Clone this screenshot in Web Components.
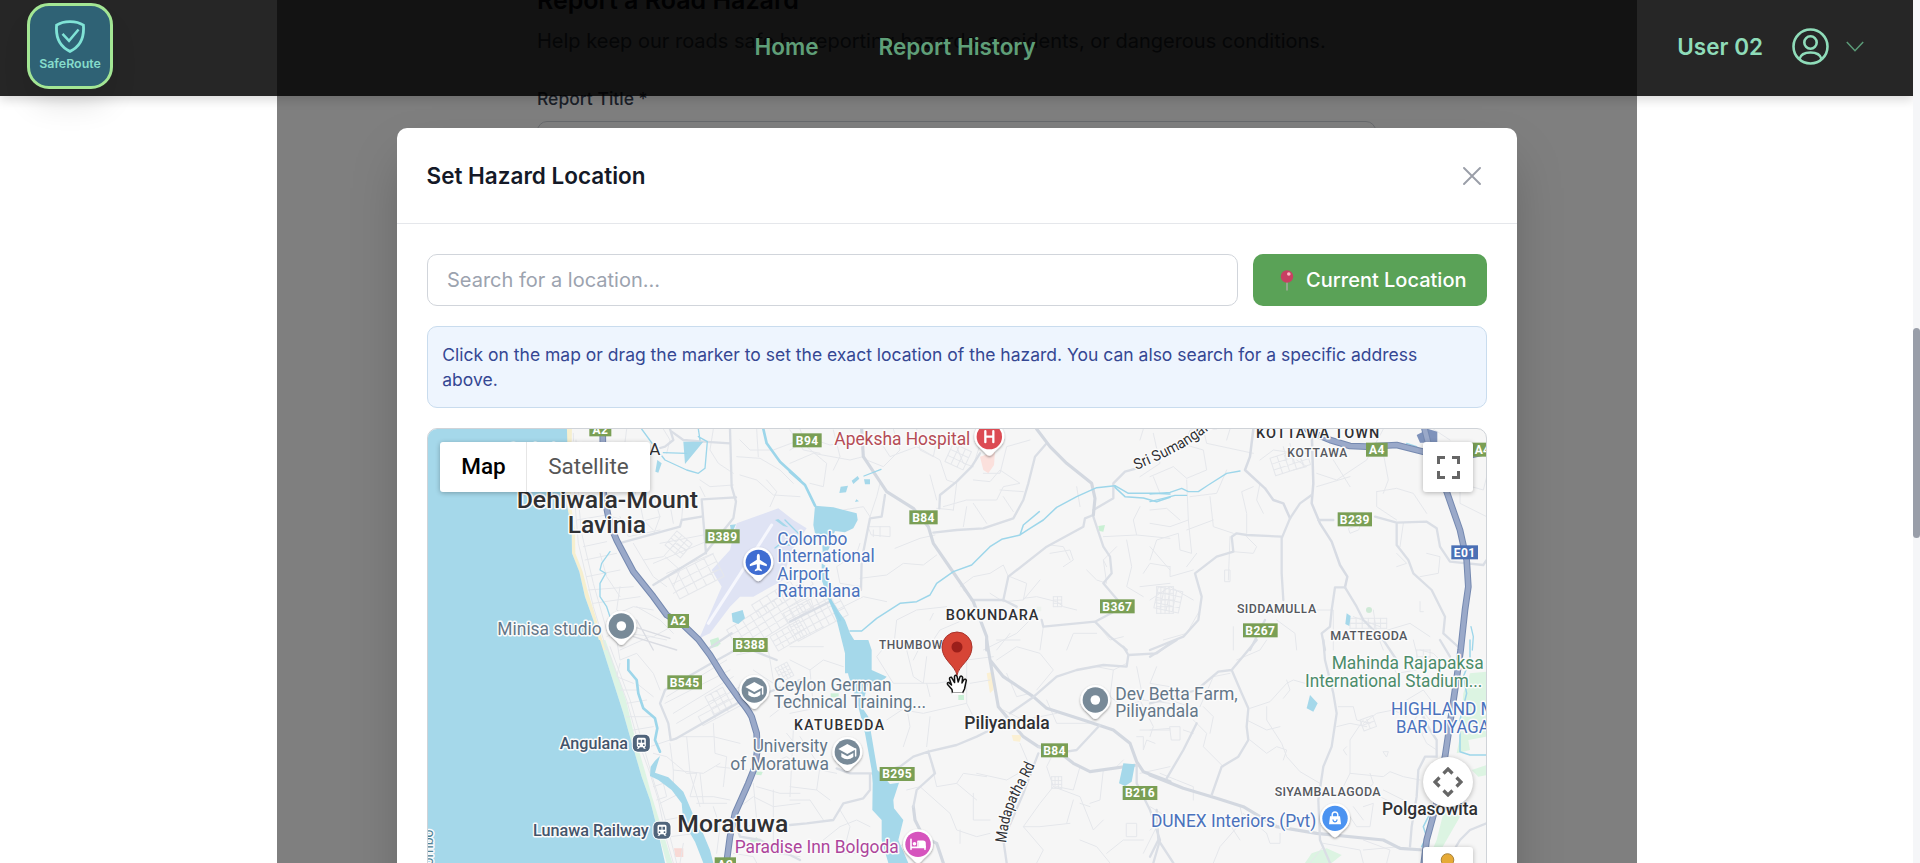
<!DOCTYPE html>
<html lang="en">
<head>
<meta charset="utf-8">
<title>SafeRoute</title>
<style>
html,body{margin:0;height:100%;overflow:hidden;background:#fff;font-family:Inter,"Liberation Sans",sans-serif}
</style>
</head>
<body>
<safe-app></safe-app>
<script>
const define = (name, html, setup) => customElements.define(name, class extends HTMLElement {
  constructor() {
    super();
    const t = document.createElement('template');
    t.innerHTML = html;
    this.attachShadow({mode: 'open'}).append(t.content.cloneNode(true));
  }
  connectedCallback() { if (setup) setup(this.shadowRoot, this); }
});

define('brand-logo', `
<style>
:host{display:flex;flex-direction:column;align-items:center;box-sizing:border-box;width:86px;height:86px;padding-top:14px;border:3px solid #a3e694;border-radius:22px;background:#2f6275;box-shadow:0 20px 30px -4px rgba(0,0,0,.1);color:#86dccb}
svg{display:block}
span{font-size:12.4px;font-weight:600;line-height:16px;margin-top:3px;white-space:nowrap}
</style>
<svg width="32" height="33" viewBox="0 0 32 34" fill="none" stroke="#80e3d6" stroke-width="2.9"><path d="M16 1.6C11.5 1.6 5.5 3 2.2 5.3C1.2 17 4.500 27 16 32.3C27.500 27 30.800 17 29.800 5.300C26.500 3 20.500 1.600 16 1.600Z"/><path d="M8.300 14.300L15 21.500L24.800 9.800" stroke-width="2.600"/></svg>
<span><slot></slot></span>`);

define('nav-bar', `
<style>
:host{display:flex;align-items:center;justify-content:space-between;box-sizing:border-box;height:96px;padding:0 49px 4px 27px;background:rgba(0,0,0,.85);box-shadow:0 4px 10px rgba(0,0,0,.15);font-size:22.5px;font-weight:600;white-space:nowrap}
nav{display:flex;gap:60px;color:#5f9f78;padding-top:1px}
.user{display:flex;align-items:center;color:#8fdcb9;padding-top:1px}
.a{margin-left:29px}.c{margin-left:17px}
svg{display:block}
</style>
<brand-logo>SafeRoute</brand-logo>
<nav><slot></slot></nav>
<div class="user"><slot name="user"></slot>
<svg class="a" width="37" height="37" viewBox="0 0 37 37" fill="none" stroke="#8fdcb9" stroke-width="2.600"><circle cx="18.500" cy="18.500" r="17"/><circle cx="18.500" cy="14.500" r="6.200"/><path d="M7.500 31C9 25.500 13.500 24.500 18.500 24.500S28 25.500 29.500 31"/></svg>
<svg class="c" width="18" height="11" viewBox="0 0 18 11" fill="none" stroke="#5b9b78" stroke-width="1.500"><path d="M.8 1L9 9.700L17.200 1"/></svg></div>`);

define('report-form', `
<style>
:host{display:block;width:839px;margin:-16px auto 0;padding-left:0;color:#111827}
h2{margin:0;font-size:25px;line-height:32px;font-weight:600}
p{margin:11px 0 0;font-size:20px;line-height:28px;color:#4b5563;white-space:nowrap}
label{display:block;margin-top:31px;font-size:17.5px;line-height:25px;font-weight:500;color:#374151}
.f{margin-top:10px;height:51px;border:1px solid #d1d5db;border-radius:10px}
</style>
<h2>Report a Road Hazard</h2>
<p>Help keep our roads safe by reporting hazards, accidents, or dangerous conditions.</p>
<label>Report Title *</label><div class="f"></div>`);

define('hazard-dialog', `
<style>
:host{display:block;width:1120px;height:900px;border-radius:10px;background:#fff;box-shadow:0 25px 50px -10px rgba(0,0,0,.25)}
header{display:flex;align-items:center;justify-content:space-between;padding:0 36px 0 29.5px;border-bottom:1px solid #e5e7eb;box-sizing:border-box;height:96px}
h3{margin:0;font-size:22.5px;line-height:35px;font-weight:600;color:#141927}
.body{display:flex;flex-direction:column;gap:20px;padding:30px}
.row{display:grid;grid-template-columns:811px 234px;gap:15px;height:52px}
.in{display:flex;align-items:center;border:1px solid #d1d5db;border-radius:10px;padding:0 19px;font-size:20px;color:#9ca3af}
.btn{display:flex;align-items:center;justify-content:flex-end;border-radius:10px;padding:0 20.5px;background:#5aa257;color:#fff;font-size:20px;font-weight:500;white-space:nowrap;gap:12px}
.note{box-sizing:border-box;height:82px;border:1px solid #c9dcee;border-radius:10px;background:#eef5fe;padding:15px 15px 15px 14.3px;font-size:17.5px;line-height:25px;color:#354793}
</style>
<header><h3><slot name="title"></slot></h3>
<svg width="18" height="18" viewBox="0 0 18 18" stroke="#9a9ea8" stroke-width="1.900" stroke-linecap="round"><path d="M1 1L17 17M17 1L1 17"/></svg></header>
<div class="body">
<div class="row"><div class="in">Search for a location...</div>
<div class="btn"><svg width="14" height="21" viewBox="0 0 14 21"><path d="M7 10V20.500" stroke="#a9a9a0" stroke-width="1.500"/><circle cx="7" cy="6.500" r="6.200" fill="#c83f62"/><circle cx="8.800" cy="4" r="1.800" fill="#ffb6c3"/></svg><span>Current Location</span></div></div>
<div class="note"><slot name="note"></slot></div>
<hazard-map></hazard-map>
</div>`);

define('map-controls', `
<style>
:host{display:block;position:absolute;inset:0;font-family:Roboto,sans-serif}
.b{position:absolute;background:#fff;box-shadow:0 1px 5px rgba(0,0,0,.28);border-radius:3px;display:flex;align-items:center;justify-content:center;box-sizing:border-box}
.t{left:12px;top:13px;width:210px;height:50px;font-size:22.500px;color:#565656;display:grid;grid-template-columns:87px 123px}
.t span{height:50px;line-height:49px;text-align:center}
.t span:first-child{font-weight:500;color:#000;border-right:1px solid #e6e6e6;box-sizing:border-box;padding-left:1px}
.f{left:995px;top:13px;width:50px;height:50px}
.p{left:995px;top:328px;width:50px;height:50px;border-radius:50%}
.m{left:995px;top:418px;width:50px;height:60px}
.m svg{align-self:flex-start;margin-top:6px}
</style>
<div class="b t"><span>Map</span><span>Satellite</span></div>
<div class="b f"><svg width="23" height="23" viewBox="0 0 23 23" fill="none" stroke="#666" stroke-width="3"><path d="M1.500 8V1.500H8M15 1.500H21.500V8M21.500 15V21.500H15M8 21.500H1.500V15"/></svg></div>
<div class="b p"><svg width="30" height="30" viewBox="0 0 30 30" fill="none" stroke="#666" stroke-width="3.200"><path d="M10.500 6.500L15 2L19.500 6.500M10.500 23.500L15 28L19.500 23.500M6.500 10.500L2 15L6.500 19.500M23.500 10.500L28 15L23.500 19.500"/></svg></div>
<div class="b m"><svg width="26" height="40" viewBox="0 0 26 40"><circle cx="12.500" cy="7" r="6.300" fill="#e6aa35" stroke="#a9833c" stroke-width="1"/><path d="M3 18q10-8 20 0v22H3z" fill="#e6aa35"/></svg></div>`);

/* Map tiles: each tile has its own origin, drawn at three units to the pixel. */
const T = {A: [420,420], B: [790,420], C: [1150,420], D: [420,640], E: [790,640], F: [1150,640]};
const tile = (k, body) => `<g transform="translate(${T[k]}) scale(.33333)">${body}</g>`;
const road = (cls, ...ds) => `<path class="${cls}" d="${ds.join('')}"/>`;
const grid = (x, y, a, w, h, nx, ny) => {
  let d = '';
  for (let i = 0; i <= nx; i++) d += `M${(w*i/nx).toFixed(1)} 0V${h}`;
  for (let j = 0; j <= ny; j++) d += `M0 ${(h*j/ny).toFixed(1)}H${w}`;
  return `<path class="n" transform="translate(${x} ${y}) rotate(${a})" d="${d}"/>`;
};
const label = (k, s, x, y, w, size, fill, weight = 400, extra = '') =>
  `<text x="${T[k][0]+x/3}" y="${T[k][1]+y/3}" textLength="${w/3}" lengthAdjust="spacingAndGlyphs" font-size="${size}" fill="${fill}" font-weight="${weight}" ${extra}>${s}</text>`;
const area = (k, s, x, y, w, size, fill, weight = 500) =>
  `<text x="${T[k][0]+x/3}" y="${T[k][1]+y/3}" textLength="${w/3}" lengthAdjust="spacing" font-size="${size}" fill="${fill}" font-weight="${weight}">${s}</text>`;
const shield = (k, s, x, y, w, fill = '#7a9f55') => {
  const px = T[k][0]+x/3, py = T[k][1]+y/3;
  return `<g><rect x="${px}" y="${py}" width="${w/3}" height="14" fill="${fill}"/><text class="s" x="${px+w/6}" y="${py+11.200}" text-anchor="middle" font-size="12" letter-spacing=".4" font-weight="700" fill="#fff">${s}</text></g>`;
};
const pin = (k, x, y, fill, glyph) =>
  `<g transform="translate(${T[k][0]+x/3} ${T[k][1]+y/3})"><path filter="url(#sh)" d="M0 -15A15 15 0 0 1 15 0C15 9 7 12 3.500 17Q0 21 -3.500 17C-7 12 -15 9 -15 0A15 15 0 0 1 0 -15Z" fill="#fff"/><circle r="12.700" fill="${fill}"/>${glyph}</g>`;
const dot = '<circle r="4.800" fill="#fff"/>';
const cap = '<path d="M-9 -3L0 -8L9 -3L0 2Z" fill="#fff"/><path d="M-6 1V5Q0 9.500 6 5V1L0 4.200Z" fill="#fff"/><path d="M8.300 -3V4" stroke="#fff" stroke-width="1.500"/>';
const train = (k, x, y) => `<g transform="translate(${T[k][0]+x/3-8.500} ${T[k][1]+y/3-8.500})"><rect x="-1" y="-1" width="19" height="19" rx="6" fill="#fff"/><rect width="17" height="17" rx="5" fill="#50647b"/><path d="M5.500 3H11.500Q13 3 13 4.500V11Q13 12 11.800 12.300L13 14H11L10 12.500H7L6 14H4L5.200 12.300Q4 12 4 11V4.500Q4 3 5.500 3Z" fill="#fff"/><path d="M5.500 5H8V8H5.500ZM9 5H11.500V8H9Z" fill="#50647b"/><circle cx="6" cy="10.300" r=".9" fill="#50647b"/><circle cx="11" cy="10.300" r=".9" fill="#50647b"/></g>`;

const slate = '#647789', blue = '#4a72bd', ink = '#2f3033';

const land =
 tile('D', `<path d="M540 0L575 110L610 220L630 290L665 410L690 480L715 580L740 669L757 669L724 560L696 470L674 390L644 290L618 180L588 90L556 0Z" fill="#ddf4e4"/>`) +
 tile('A', `<path d="M435 20L443 100L440 250L455 330L456 400L478 455L495 530L520 600L545 690L556 690L530 600L505 520L488 455L466 400L465 330L452 250L456 20Z" fill="#f6efcf"/>
  <path d="M1075 265L1120 300L1160 325L1110 400L1090 480L1000 530L960 530L930 560L870 640L838 655L905 500L875 450L930 390L950 310Z" fill="#dfe3f4"/>
  <path d="M1055 315L865 610" stroke="#f6f7fd" stroke-width="9"/>`) +
 tile('B', `<path d="M570 110L615 95L612 135L595 160L580 150Z" fill="#fbe0dc"/><path d="M925 318L945 315L940 335L928 333Z" fill="#c9f0d3"/><path d="M740 560h14v14h-14z" fill="#eef3ee"/>`) +
 tile('C', `<circle cx="657" cy="570" r="9" fill="#cfe9d6"/>`) +
 tile('A', `<path d="M870 660L895 652L902 672L878 682Z" fill="#cdf0d7"/>`) +
 tile('D', `<path d="M870 0h30l-5 18-20 6z" fill="#cdf0d7"/><path d="M762 625h28v26h-24z" fill="#f8d9d5"/><path d="M990 600l20-8 12 14-30 2z" fill="#cdf0d7"/><path d="M1010 392l18 4-4 10-16-2z" fill="#cdf0d7"/>`) +
 tile('E', `<path d="M505 165h17v15h-17z" fill="#c9efd5"/><path d="M122 160h24v12h-24z" fill="#cdf0d7"/><path d="M590 100L610 95L610 150L600 160ZM665 285L695 285L690 305L670 303Z" fill="#fbf0d3"/>`) +
 tile('F', `<path d="M1010 95L960 100L940 160L930 290L920 340L960 330L955 300L1010 290ZM1010 375L965 390L985 410L1010 405ZM935 365L900 440L880 520L860 600L830 669H850L930 530L960 420ZM485 640L530 625L575 645L545 669H465Z" fill="#dcf4e2"/>`);

const water =
 tile('A', `<path d="M0 0H440L443 100L440 250L455 330L456 400L478 455L495 530L520 600L545 690L555 720H0Z"/>`) +
 tile('D', `<path d="M0 0H540L575 110L610 220L630 290L665 410L690 480L715 580L740 690H0Z"/>
  <path d="M705 362L720 348L710 380L705 398L745 412L790 455L805 490L820 525L845 570L870 630L880 669H850L825 605L790 545L785 490L755 450L715 420L690 408L692 380Z"/>`) +
 tile('A', `<path d="M790 65H850L795 132ZM706 155L712 120L725 130L715 158ZM935 580L968 570L975 595L955 612L938 605ZM930 315L948 313L940 330L932 328ZM1065 300L1075 297L1105 322L1090 318Z"/>`) +
 tile('B', `<path d="M75 257L130 262L200 280L203 300L190 325L165 337L135 333L130 345L112 360L75 340L70 315ZM97 375h25l-12 25h-12zM152 200l22-3-6 20-20 2zM185 182l18-14 5 8-18 16zM222 178h18v15h-15zM199 238l8 6-12 2z"/>
  <path d="M95 430L110 440L125 540L150 580L165 600L180 640L205 680L235 695V760H165L165 700L140 600L118 545L95 480Z"/>`) +
 tile('E', `<path d="M160 0L235 0L245 30L245 90L290 110L280 120L235 130L215 200L235 230L262 390L300 432L327 428L310 480L312 505L340 540L325 600L355 669H295L275 600L275 540L247 510L248 430L245 390L225 280L205 200L175 105Z"/><path d="M1000 370L1035 373L1025 425L1005 438L987 430Z"/>`) +
 tile('F', `<path d="M480 165L503 190L490 215L470 205Z"/>`) +
 tile('C', `<path d="M590 580L602 588L598 618L586 612Z"/>`);

const streams =
 tile('A', road('w w6','M1030 27L1040 70L1080 125L1140 180') +
  road('w w3','M665 27L700 75L735 120L800 150L835 160L855 145L862 65L835 50','M730 98L800 100','M835 27L840 60','M570 395L545 430L540 450L557 460L540 490L540 530L560 560L570 590','M1065 384L1080 372L1110 375','M1095 300L1140 345')) +
 tile('B', road('w w6','M0 155L45 195L75 257','M120 540L150 600') +
  road('w w4','M180 633H215L260 595L330 550L380 545L420 525L440 490L490 455L545 435L600 380L635 358L690 345L720 325L760 300L800 262L860 230L920 203L975 197L1015 220H1090L1140 222','M975 202L1005 230L1060 234L1100 245L1140 232','M690 345L700 315L748 275') + road('w w3','M222 168L273 148')) +
 tile('C', road('w w3','M0 222L60 217L95 205L115 215L145 215L175 195L230 160L270 153','M0 245L40 235L75 226L110 226','M963 620L970 650L967 690','M800 80L770 70')) +
 tile('D', road('w w6','M625 60L625 90L650 120L655 160L670 205L705 235L712 265L705 300L720 335')) +
 tile('F', road('w w4','M960 0L960 60L940 110L950 160L930 240L930 335L960 345L1010 345') + road('w w4','M835 530L820 560L830 590L815 620'));

const minor =
 tile('A', road('n',
  'M460 40L465 250L475 370L520 560L560 690','M468 60L476 250L485 340L520 490L560 630','M620 27L612 90L640 130L650 200L640 250','M480 80L545 85M478 120L545 130M478 180L550 175',
  'M470 300L560 285L640 310L720 290M600 290L625 350L720 330M660 250L670 300L700 330M700 225L720 290L700 345M745 225L760 310M790 230L785 300M640 370L670 420L730 410L765 370L800 390',
  'M490 380L560 365M495 420L590 400M500 470L600 450M505 510L640 500M520 550L660 530M540 400L560 470L600 530M600 500L590 570L650 610M570 590L640 560L700 570',
  'M670 420L700 470L740 500M735 410L780 450L760 500M720 370L850 345M700 430L870 360M740 460L880 400M760 520L890 450M650 560L720 600L760 640',
  'M880 27L870 90L895 130L940 160M840 180L870 200L940 195M840 200L855 230M950 110L1020 115L1080 150L1120 190M960 165L1010 180L1060 225L1140 230M1010 27L1015 110M1040 180L1070 215L1050 260',
  'M960 60L990 90L1060 90L1140 60M730 27L750 60L740 100M620 640L700 650L790 600M600 690L690 650L740 660M560 650L620 620L600 580') +
  grid(745,470,-27,150,75,5,3) + grid(920,630,-32,250,80,9,4) + grid(995,555,-32,190,45,7,2) + grid(735,375,-50,55,60,4,3) +
  road('n2','M640 620L750 655M640 650L770 690M650 600L700 690')) +
 tile('B', road('n',
  'M0 90L60 55L120 75L200 60M30 27L50 80L110 130L100 200L60 190M0 130L70 100L180 120L220 110M255 40L300 110L380 80L450 120L470 180L500 190M310 27L330 90L280 140L230 120M380 27L390 90L430 110L440 60L500 40M500 80L520 130L550 140M555 120L575 60',
  'M0 30L40 90L90 100M130 30L150 110L130 150M420 165L440 240M550 180L600 185L630 150L690 190L640 200L620 240L530 240L460 260M530 260L520 320M580 160L630 160L650 80L720 60M630 210L700 215M640 230L670 275M550 250L590 310',
  'M240 290L220 260L160 270M235 320H300V350L245 345ZM250 330V350M270 320V350M435 345L390 355L315 385M440 405L400 435L340 430L290 465L210 475M500 190L490 270M490 270L440 265',
  'M215 500L150 490L140 440L200 400L210 370M240 290L260 230L270 190M140 570L220 530L290 545M510 500L550 470L600 460L640 435L655 470M660 470L710 490L700 540L640 545M520 510L550 540M700 535L740 530L800 545L820 560L860 570M780 400L840 390L850 420L820 440M780 375L820 380L840 420',
  'M750 480L700 540M890 450L920 480L950 490L940 420M940 350L1040 345L1140 355M980 380L940 420L950 440M1010 360L1025 440L1010 500L1060 530M1050 260L1030 300L1040 345M1090 40L1110 130L1050 170M1060 27L1050 60M1110 220L1090 170M1140 440L1080 430L1060 460M1140 490L1050 500M860 200L870 260M600 520L640 545',
  'M310 690L320 600L380 570L470 560M430 580L420 600M410 690L450 630L520 600M580 690L680 640L720 600L700 600M620 690L660 640M760 620L750 690M920 610L960 660L1000 650M830 690L850 640L920 640M0 670L100 620M0 560L60 530L80 590M0 500L60 500L90 560') +
  grid(490,70,25,60,60,3,3) + grid(-20,580,-28,170,95,8,4) + grid(1100,500,0,50,80,4,4) + grid(790,530,0,25,30,2,3)) +
 tile('C', road('n',
  'M0 170L70 140L110 175L170 150L160 90L90 70M110 180L115 300L125 400L90 390L85 340L20 360L0 420M115 300L60 320L0 310M120 230L200 220L230 150M180 230L190 320L250 340M190 300L110 330M0 270L50 265L90 300',
  'M110 60L120 30L200 27M230 60L240 27M160 27L170 70L310 100M310 200L275 215L290 280L290 340M330 190L320 240L340 280M290 350L320 380L310 400L250 395M240 350L235 480M225 450H240V485H225Z',
  'M500 160L560 180L650 120L700 27M700 100L715 180L700 220M680 215L740 205L790 220L830 280M680 215L680 260L740 300M830 400L870 410L865 460L810 470M740 400L770 430L740 440M550 120L600 200M500 200L600 170M760 310L750 380',
  'M850 27L900 60M930 200L930 250L1010 290M930 190L1000 210L1010 170M700 690L680 640L780 610L840 650M0 540L60 500L130 540M60 440L60 470L130 450M40 660L110 640L150 570M250 620L250 690M440 690L435 640L380 600M500 570L550 570L550 690M600 610H710M610 590L690 620M670 570L680 640M810 545V575H820',
  'M440 120L470 140L430 150M330 120L370 90L440 100L460 130M400 80L410 120M420 70L430 130M0 380L60 450M110 440L140 400M625 330L600 340L595 325L630 315Z') +
  grid(360,115,-18,110,55,5,3) + grid(25,500,12,75,65,4,4) + grid(600,595,0,110,30,6,2)) +
 tile('D', road('n',
  'M560 20L620 180L650 290L690 400L715 480L740 600L760 669','M570 20L630 180L665 300L700 420L725 500L750 590L770 669','M590 0L600 60L650 40L700 100L720 150M600 70L590 110L640 130M600 150L650 150M620 190L680 180M620 230L700 230M640 270L700 260M650 130L700 170',
  'M700 340L740 350L800 400L830 400M690 320L780 290L880 290L960 310M750 310L760 390L850 400L900 370M800 290L810 400L840 500M880 250L885 340L920 350L910 440M760 390L760 450M830 400L810 470L880 470L930 480M890 380L980 390M840 400L850 490M830 490L920 490',
  'M740 170L920 60M735 190L930 90M760 220L940 110M770 250L960 140M1000 90L1060 130M950 45L1020 30M1100 280L1140 330M1050 230L1140 160M1040 160L1140 120M1025 380L1100 350L1140 380M1010 440L1080 460L1140 460M960 500L1000 470L1060 500L1140 490M960 580L1010 540L1060 560L1060 640L1140 650M940 640L1000 650L1010 669M1000 430L1010 540M1060 450L1060 560M1120 270L1110 470',
  'M700 440L730 430L740 470L710 480M720 490L780 460M735 540L790 530M750 590L830 580M790 610L780 669M830 570L900 560M880 500L900 560L890 640M850 540L930 540M950 0L1000 30M1040 0L1060 120') +
  grid(855,170,-28,60,60,3,3) + grid(1065,85,-28,40,45,4,4) + grid(835,230,-28,130,30,3,1) + grid(1050,-10,-30,100,50,5,3)) +
 tile('E', road('n',
  'M370 60L400 0M300 0L260 50L310 130L440 130M350 30L370 110L400 130L410 50M440 130L470 125M410 130L420 170M280 200L400 220L530 190L560 250M290 240L350 200L360 260L340 320M420 230L410 320M415 330L440 440L500 430L560 480M390 440L480 520L500 570L560 590L600 580M510 570V610M500 430L520 400L590 410M550 460L550 540L600 540',
  'M530 190L530 60L610 50M540 130L600 120M620 60L680 20L750 40L790 90L740 150M620 0L690 0M650 100L680 170L720 160M640 210L700 240L800 220M770 180L800 250L900 250M800 320L770 380L790 440L750 490L700 560L760 630L740 669M870 380L850 450L800 440M790 440L870 470L910 570L940 540M700 560L750 560L840 550M850 480L830 550M870 490L900 500M940 390L930 480L900 490M870 600L920 620L960 669',
  'M920 80L970 90L960 170L900 190M970 90L1010 70M960 170L1000 200L1060 180M1050 180L1090 260L1080 290M1040 80L1060 180L1140 190M1100 80L1080 130L1140 140M1050 270H1140M1040 290L1060 290V330L1070 300L1095 310M980 380L1000 360M950 640L1000 600L1060 600M1050 400L1140 380M1010 550H1040V590H1010ZM1120 540L1080 570M1100 560L1060 640M690 310L720 380L650 420L560 400',
  'M30 290L90 380L80 450L0 440M90 390L140 400M80 450L120 480M0 480L60 480L100 540M0 390L60 380M150 560L200 540L240 560M150 510L180 560L160 640L200 640M0 220L100 200M0 60L60 90L100 60L160 80M60 90L70 200M0 20L100 20M100 600L150 560M350 450L390 440M370 590L330 620') +
  grid(785,410,0,30,35,3,3)) +
 tile('F', road('n',
  'M260 60L330 30L350 0M240 100L190 110L150 200M300 205L360 185L410 130L430 120L500 140M410 120L420 150L400 175M290 240L350 270L390 260M350 200L350 240L395 310L410 350L450 395L510 430M300 300L350 340L380 320L410 330L400 360M130 240L170 280L160 320L220 380M160 200L190 230L180 280M60 260H90V300H65ZM100 270L130 280',
  'M565 200L610 200L620 240L660 250M560 260L600 250L650 260M640 250L680 220L730 210L770 230M640 240L600 300L600 400L580 440M590 320L580 330L590 345M600 400L700 410L720 395L760 410L810 420M660 400L670 430L650 450L690 470L750 500M650 450L600 440M640 500L670 490L660 560L620 560L600 530M610 500L640 540M700 450L760 480',
  'M805 60L790 0M810 30L850 40L870 60M800 230L780 260L820 280M810 270L830 310L860 330M700 335L715 335L710 350ZM0 190L60 180L120 200M30 400L80 420L130 440L130 480M270 500L280 540L210 620L190 669M350 580L360 610L390 610L390 580M280 520L350 580M640 630L750 620M640 669L630 630L520 610M230 540L270 600M640 600L720 630L710 669M480 669L520 620M0 270L60 265M720 60L740 100L800 90M770 180L820 150L850 190M790 180L840 240M0 500L50 530L30 560') +
  grid(800,30,0,40,40,2,2) + grid(630,240,-20,40,35,2,2));

const mid =
 tile('A', road('m',
  'M755 35L790 60L850 65L930 70M930 27L935 200L948 245L940 295L855 400L700 495M845 238L948 232M605 368L780 320L785 300L845 290M845 238L858 400M860 690L935 640') + road('m2','M750 27L760 60L735 80L700 90')) +
 tile('B', road('m',
  'M770 70L735 110L715 190L700 240L670 295L580 325L500 330L430 338','M570 100L545 140L500 185L450 225L448 265','M285 225L275 290L240 295L215 420L213 510','M910 285L885 295L880 320L770 380L655 470L640 540L545 540','M640 540L680 560M755 600L760 620L915 605L1000 560L940 490L965 460L960 410L940 380L910 290','M1040 145L1005 155L970 190L970 235L910 270','M915 605L960 650L1010 690','M0 605L120 545') +
  road('mm','M215 27L220 110L290 215L370 265L415 320L430 370L485 450L550 545L590 650V690M740 27L780 80L830 130L905 190L915 235L910 285')) +
 tile('C', road('mm2','M310 27L300 110L285 150L345 205L370 240L400 250L420 295M485 27L490 190L485 250L510 310L545 365L570 435L592 470L585 502') +
  road('m','M485 225L450 250L420 295L395 355L395 460L400 540','M395 350L290 345L260 340L245 350L250 395L200 410L135 460L155 530L145 600L100 650L0 690','M505 300L550 300M675 290L740 308L830 305L860 325L870 380L900 425L1000 435L1010 420','M740 308L740 375L775 420L790 460L845 510L885 590L880 640L935 690','M585 502H555L545 570L540 620L515 640L525 690','M585 502L620 560L640 600L700 660','M345 600L300 690')) +
 tile('D', road('m','M755 300L770 295L960 185M752 300L745 250L720 190L735 150L865 75L1000 0','M960 190L1140 120M970 20L1070 60','M940 530L960 590L1020 600L1140 660')) +
 tile('E', road('mm','M590 0L600 60L640 110L730 170L770 205L880 240L970 270L1020 310L1040 365L1060 395L1140 425','M600 60L625 200L700 290L745 320','M745 320L800 330L850 370L900 395L1040 375','M370 500L375 540L400 590L440 610L460 669') +
  road('m','M745 320L780 330L830 335L860 330L930 255','M660 220L725 175L800 110L860 90L940 75L1010 80L1015 45L1000 20','M415 335L500 315L560 290L600 270M415 335L435 400L380 450L370 500M415 335L370 350L330 380L260 400L180 400L140 385','M240 400L240 450L220 475L160 490L130 540L50 550L0 555','M1040 375L1040 430L1080 510L1110 600L1090 669','M745 340L700 460L640 600L650 669','M1015 45L1100 40L1140 10')) +
 tile('F', road('mm','M0 405L100 445L200 475L280 500L380 560L500 580L700 600L750 625L820 630') +
  road('m','M185 465L215 380L265 350L295 300L290 260L295 205L275 160L245 90L205 95L140 150L0 190','M245 90L320 0','M140 250L120 290L100 330L50 415','M520 0L525 60L550 160L560 220L545 320L520 380L505 480L510 600L540 669','M0 50L80 0','M700 0L740 60M870 0L900 50','M860 350L825 350L805 390L800 470L785 560L780 620M820 230L840 270L860 300V350','M1010 550L960 570L930 600L900 650','M20 510L25 600L0 650M25 600L70 669') );

const hw = d => road('h1', d) + road('h2', d);
const highways =
 `<g transform="translate(420 420) scale(.33333)">${hw('M548 20L550 215L565 290Q580 345 600 380L640 455L700 530L740 585L790 615L835 658L870 705L910 770L960 840Q985 870 995 890L1010 940L1012 990L1005 1040L985 1090L945 1180L930 1250L918 1340')}</g>` +
 tile('C', `<path d="M800 45L835 27L862 35L862 68H810Z" fill="#7e92bb"/>` + hw('M440 0L480 35L540 60L600 78L650 80L740 75L820 95L940 110L1010 95') + hw('M822 20L840 90L890 215L930 330L950 420L955 500L945 570L932 690L915 810L885 1010L860 1150L830 1260L820 1340'));

const labels =
 shield('A','A2',508,7,66) + shield('A','B389',856,328,103) + shield('A','A2',743,582,64) + shield('A','B388',939,654,104) +
 shield('B','B94',8,40,87) + shield('B','B84',358,271,85) + shield('B','B367',930,538,104) +
 shield('C','A4',648,68,65) + shield('C','A4',965,68,65) + shield('C','B239',563,277,103) + shield('C','B267',279,610,104) + shield('C','E01',904,376,80,'#4b70b5') +
 shield('D','B545',742,106,104) + shield('D','A2',884,652,64) + shield('E','B295',269,381,105) + shield('E','B84',753,310,81) + shield('E','B216',998,438,104) +
 area('A','GALKISSA',262,104,459,17,ink,400) +
 label('A','Dehiwala-Mount',290,264,544,23.500,ink,500) + label('A','Lavinia',443,338,235,23.500,ink,500) +
 label('A','Minisa studio',232,644,313,17.500,slate) +
 label('B','Apeksha Hospital',133,76,408,17.500,'#b54c55') +
 label('A','Colombo',1072,374,210,17.500,blue) + label('A','International',1072,427,292,17.500,blue) + label('A','Airport',1072,480,157,17.500,blue) + label('A','Ratmalana',1072,532,249,17.500,blue) +
 area('B','BOKUNDARA',467,600,278,14.500,ink) + area('B','THUMBOW',267,688,190,12,'#55585e') +
 area('C','KOTTAWA TOWN',318,53,370,14.500,ink) + area('C','KOTTAWA',412,110,180,12,'#55585e') + area('C','SIDDAMULLA',261,578,238,12.500,'#55585e') + area('C','MATTEGODA',541,660,231,12.500,'#55585e') +
 label('E','Piliyandala',523,266,256,18,ink,500) + area('D','KATUBEDDA',1122,269,270,14,ink) +
 label('D','Ceylon German',1061,152,354,17.500,slate) + label('D','Technical Training...',1061,205,457,17.500,slate) +
 label('D','University',998,337,225,17.500,slate) + label('D','of Moratuwa',931,389,296,17.500,slate) +
 label('E','Dev Betta Farm,',976,180,367,17.500,slate) + label('E','Piliyandala',976,232,250,17.500,slate) +
 label('D','Angulana',419,326,205,17,'#43546b',500) + label('D','Lunawa Railway',339,587,347,17,'#43546b',500) +
 label('D','Moratuwa',772,576,333,24,ink,500) + label('D','Paradise Inn Bolgoda',944,639,492,17.500,'#ad459b') +
 label('F','Mahinda Rajapaksa',545,88,456,17.500,'#4b8c6a') + label('F','International Stadium...',465,140,532,17.500,'#4b8c6a') +
 label('F','HIGHLAND M',723,226,314,17.500,blue) + label('F','BAR DIYAGAMA',738,278,358,17.500,blue) +
 area('F','SIYAMBALAGODA',374,468,318,12.500,'#55585e') + label('F','Polgasowita',696,525,288,18,ink,500) + label('F','DUNEX Interiors (Pvt)',3,561,496,17.500,blue) +
 `<text font-size="15" fill="${ink}" textLength="91" lengthAdjust="spacingAndGlyphs"><textPath href="#sri">Sri Sumangala</textPath></text>` +
 `<text font-size="15.500" fill="${ink}" textLength="84" lengthAdjust="spacingAndGlyphs"><textPath href="#mad">Madapatha Rd</textPath></text>` +
 `<text font-size="14" fill="#4e8296" transform="translate(433 886) rotate(-90)">Colombo</text>`;

const pins =
 pin('A',1015,427,'#3f6dd2','<path d="M0 -8.500Q1.500 -8.500 1.500 -6V-2.500L8.500 2V4L1.500 2V6L3.500 7.700V9L0 8L-3.500 9V7.700L-1.500 6V2L-8.500 4V2L-1.500 -2.500V-6Q-1.500 -8.500 0 -8.500Z" fill="#fff"/>') +
 pin('A',604,618,'#788a98',dot) + pin('B',598,50,'#dc4b53','<path d="M-4 -5.500V5.500M4 -5.500V5.500M-4 0H4" stroke="#fff" stroke-width="2.300"/>') +
 pin('D',1003,150,'#788a98',cap) + pin('E',172,336,'#788a98',cap) + pin('E',916,180,'#788a98',dot) +
 pin('E',384,613,'#d654bd','<path d="M-7 -5V5M-7 3H7V-1Q7 -3 5 -3H0V2" fill="none" stroke="#fff" stroke-width="1.600"/><path d="M1 -3H5Q7 -3 7 -1V3H1Z" fill="#fff"/><circle cx="-3.500" cy="-.6" r="1.800" fill="#fff"/><path d="M7 2V5" stroke="#fff" stroke-width="1.600"/>') +
 pin('F',555,535,'#4b93f1','<path d="M-5 -2H5L6 6H-6Z" fill="#fff"/><path d="M-2.800 -1V-3.500A2.800 2.800 0 0 1 2.800 -3.500V-1" fill="none" stroke="#fff" stroke-width="1.400"/><path d="M-2 1.500A2 2 0 0 0 2 1.500" fill="none" stroke="#4b93f1" stroke-width="1.200"/>') +
 train('D',664,310) + train('D',726,571) +
 `<g transform="translate(957 647)"><path d="M0 28C-2 18 -15 13 -15 0A15 15 0 0 1 15 0C15 13 2 18 0 28Z" fill="#d74536" stroke="#a9332b" stroke-width="1"/><circle r="5.500" fill="#9c1f1a"/></g>
 <g transform="translate(947 675)"><path d="M5.500 18L5 14.500L.6 9.500Q-.2 7.500 1.600 7.400L4.500 10L2.500 4Q2.500 1.800 4.500 2.300L7.600 7.500L7.500 1.500Q8.300 -.7 10 1.200L11.200 7L13 1.700Q14.700 .3 15.600 2.300L15 8L17 4.500Q18.700 3.500 19.300 5.300L17.500 14L15.500 18Z" fill="#fff" stroke="#111" stroke-width="1.500" stroke-linejoin="round"/><path d="M6 18.500H15" stroke="#fff" stroke-width="2"/></g>`;

define('hazard-map', `
<style>
:host{display:block;position:relative;box-sizing:border-box;width:1060px;height:500px;border:1px solid #cfd3d8;border-radius:10px;overflow:hidden;background:#f6f6f6}
svg.map{display:block;font-family:Roboto,sans-serif}
.map path{stroke-linejoin:round;stroke-linecap:round}
.n,.n2,.m,.m2,.mm,.mm2,.w,.h1,.h2{fill:none}
.n{stroke:#e5e7eb;stroke-width:3}.n2{stroke:#dadce2;stroke-width:4}
.m,.m2{stroke:#dadee5;stroke-width:7}.mm{stroke:#d3d8e0;stroke-width:9.500}.mm2{stroke:#d7dbe3;stroke-width:7.500}
.w{stroke:#9dd6ea}.w3{stroke-width:4}.w4{stroke-width:4.500}.w6{stroke-width:8}
.h1{stroke:#7589b0;stroke-width:20}.h2{stroke:#9aa9c9;stroke-width:14}
text{paint-order:stroke;stroke:#fbfbfb;stroke-width:3px;stroke-linejoin:round}
text.s{stroke:none}
</style>
<svg class="map" width="1058" height="498" viewBox="428 429 1058 498">
<defs><filter id="sh" x="-30%" y="-30%" width="160%" height="170%"><feDropShadow dx="0" dy="1.200" stdDeviation="1.200" flood-color="#000" flood-opacity=".4"/></filter>
<path id="sri" d="M1136 470Q1160 460 1177 451T1222 420"/><path id="mad" d="M1006 843Q1009 812 1022 790T1038 755"/></defs>
${land}${minor}${mid}<g fill="#a5d8ea">${water}</g>${streams}${highways}${labels}${pins}
</svg>
<map-controls></map-controls>`);

define('safe-app', `
<style>
:host{display:grid;grid-template-columns:1913px 7px;width:1920px;height:863px;overflow:hidden;position:relative;background:#fff}
.page{position:relative;height:863px;overflow:hidden;display:flow-root}
nav-bar{position:absolute;inset:0 0 auto 0}
.overlay{position:absolute;top:0;bottom:0;left:277px;width:1360px;background:rgba(0,0,0,.5);overflow:hidden;display:flex;justify-content:center;align-items:flex-start;padding-top:128px;box-sizing:border-box}
.bar{background:#f5f6f8}
.thumb{margin-top:328px;height:210px;background:#999ea9;border-radius:4px}
</style>
<div class="page">
<report-form></report-form>
<div class="overlay"><hazard-dialog><span slot="title">Set Hazard Location</span><span slot="note">Click on the map or drag the marker to set the exact location of the hazard. You can also search for a specific address above.</span></hazard-dialog></div>
<nav-bar><span>Home</span><span>Report History</span><span slot="user">User 02</span></nav-bar>
</div>
<div class="bar"><div class="thumb"></div></div>`);
</script>
</body>
</html>
